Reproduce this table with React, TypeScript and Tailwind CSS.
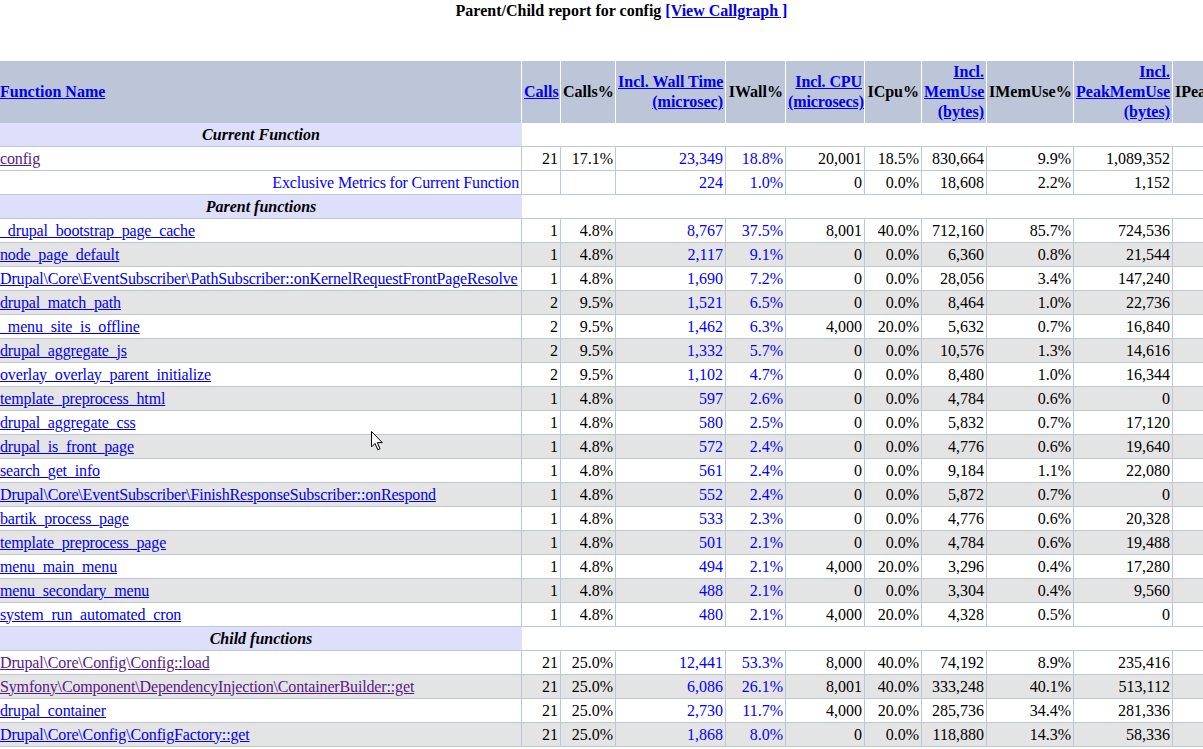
type Row = {
  name: string;
  visited?: boolean;
  calls: string;
  callsPct: string;
  wall: string;
  wallPct: string;
  cpu: string;
  cpuPct: string;
  mem: string;
  memPct: string;
  peak: string;
  peakPct: string;
};

const parents: Row[] = [
  { name: "_drupal_bootstrap_page_cache", calls: "1", callsPct: "4.8%", wall: "8,767", wallPct: "37.5%", cpu: "8,001", cpuPct: "40.0%", mem: "712,160", memPct: "85.7%", peak: "724,536", peakPct: "66.5%" },
  { name: "node_page_default", calls: "1", callsPct: "4.8%", wall: "2,117", wallPct: "9.1%", cpu: "0", cpuPct: "0.0%", mem: "6,360", memPct: "0.8%", peak: "21,544", peakPct: "2.0%" },
  { name: "Drupal\\Core\\EventSubscriber\\PathSubscriber::onKernelRequestFrontPageResolve", calls: "1", callsPct: "4.8%", wall: "1,690", wallPct: "7.2%", cpu: "0", cpuPct: "0.0%", mem: "28,056", memPct: "3.4%", peak: "147,240", peakPct: "13.5%" },
  { name: "drupal_match_path", calls: "2", callsPct: "9.5%", wall: "1,521", wallPct: "6.5%", cpu: "0", cpuPct: "0.0%", mem: "8,464", memPct: "1.0%", peak: "22,736", peakPct: "2.1%" },
  { name: "_menu_site_is_offline", calls: "2", callsPct: "9.5%", wall: "1,462", wallPct: "6.3%", cpu: "4,000", cpuPct: "20.0%", mem: "5,632", memPct: "0.7%", peak: "16,840", peakPct: "1.5%" },
  { name: "drupal_aggregate_js", calls: "2", callsPct: "9.5%", wall: "1,332", wallPct: "5.7%", cpu: "0", cpuPct: "0.0%", mem: "10,576", memPct: "1.3%", peak: "14,616", peakPct: "1.3%" },
  { name: "overlay_overlay_parent_initialize", calls: "2", callsPct: "9.5%", wall: "1,102", wallPct: "4.7%", cpu: "0", cpuPct: "0.0%", mem: "8,480", memPct: "1.0%", peak: "16,344", peakPct: "1.5%" },
  { name: "template_preprocess_html", calls: "1", callsPct: "4.8%", wall: "597", wallPct: "2.6%", cpu: "0", cpuPct: "0.0%", mem: "4,784", memPct: "0.6%", peak: "0", peakPct: "0.0%" },
  { name: "drupal_aggregate_css", calls: "1", callsPct: "4.8%", wall: "580", wallPct: "2.5%", cpu: "0", cpuPct: "0.0%", mem: "5,832", memPct: "0.7%", peak: "17,120", peakPct: "1.6%" },
  { name: "drupal_is_front_page", calls: "1", callsPct: "4.8%", wall: "572", wallPct: "2.4%", cpu: "0", cpuPct: "0.0%", mem: "4,776", memPct: "0.6%", peak: "19,640", peakPct: "1.8%" },
  { name: "search_get_info", calls: "1", callsPct: "4.8%", wall: "561", wallPct: "2.4%", cpu: "0", cpuPct: "0.0%", mem: "9,184", memPct: "1.1%", peak: "22,080", peakPct: "2.0%" },
  { name: "Drupal\\Core\\EventSubscriber\\FinishResponseSubscriber::onRespond", calls: "1", callsPct: "4.8%", wall: "552", wallPct: "2.4%", cpu: "0", cpuPct: "0.0%", mem: "5,872", memPct: "0.7%", peak: "0", peakPct: "0.0%" },
  { name: "bartik_process_page", calls: "1", callsPct: "4.8%", wall: "533", wallPct: "2.3%", cpu: "0", cpuPct: "0.0%", mem: "4,776", memPct: "0.6%", peak: "20,328", peakPct: "1.9%" },
  { name: "template_preprocess_page", calls: "1", callsPct: "4.8%", wall: "501", wallPct: "2.1%", cpu: "0", cpuPct: "0.0%", mem: "4,784", memPct: "0.6%", peak: "19,488", peakPct: "1.8%" },
  { name: "menu_main_menu", calls: "1", callsPct: "4.8%", wall: "494", wallPct: "2.1%", cpu: "4,000", cpuPct: "20.0%", mem: "3,296", memPct: "0.4%", peak: "17,280", peakPct: "1.6%" },
  { name: "menu_secondary_menu", calls: "1", callsPct: "4.8%", wall: "488", wallPct: "2.1%", cpu: "0", cpuPct: "0.0%", mem: "3,304", memPct: "0.4%", peak: "9,560", peakPct: "0.9%" },
  { name: "system_run_automated_cron", calls: "1", callsPct: "4.8%", wall: "480", wallPct: "2.1%", cpu: "4,000", cpuPct: "20.0%", mem: "4,328", memPct: "0.5%", peak: "0", peakPct: "0.0%" },
];

const children: Row[] = [
  { name: "Drupal\\Core\\Config\\Config::load", visited: true, calls: "21", callsPct: "25.0%", wall: "12,441", wallPct: "53.3%", cpu: "8,000", cpuPct: "40.0%", mem: "74,192", memPct: "8.9%", peak: "235,416", peakPct: "21.6%" },
  { name: "Symfony\\Component\\DependencyInjection\\ContainerBuilder::get", visited: true, calls: "21", callsPct: "25.0%", wall: "6,086", wallPct: "26.1%", cpu: "8,001", cpuPct: "40.0%", mem: "333,248", memPct: "40.1%", peak: "513,112", peakPct: "47.1%" },
  { name: "drupal_container", calls: "21", callsPct: "25.0%", wall: "2,730", wallPct: "11.7%", cpu: "4,000", cpuPct: "20.0%", mem: "285,736", memPct: "34.4%", peak: "281,336", peakPct: "25.8%" },
  { name: "Drupal\\Core\\Config\\ConfigFactory::get", calls: "21", callsPct: "25.0%", wall: "1,868", wallPct: "8.0%", cpu: "0", cpuPct: "0.0%", mem: "118,880", memPct: "14.3%", peak: "58,336", peakPct: "5.4%" },
];

const current: Row = { name: "config", visited: true, calls: "21", callsPct: "17.1%", wall: "23,349", wallPct: "18.8%", cpu: "20,001", cpuPct: "18.5%", mem: "830,664", memPct: "9.9%", peak: "1,089,352", peakPct: "9.5%" };

// shared cell look; alignment added per cell
const cell = "h-6 border-b border-r border-[#bdc7d8] whitespace-nowrap leading-[22px]";
const td = `${cell} px-[2px] text-right`;
const nameTd = `${cell} overflow-hidden pr-[2px] pl-0 text-left tracking-[-0.15px]`;
const th = "border-r border-white px-[2px] align-middle font-bold leading-5 whitespace-nowrap";
const headLink = "text-[#0000ee] underline";

function Section({ title }: { title: string }) {
  return (
    <tr>
      <td className="h-6 border-b border-[#bdc7d8] bg-[#dedffa] text-center font-bold italic leading-[22px]">
        {title}
      </td>
      <td colSpan={10} className="h-6 border-b border-[#bdc7d8] bg-white" />
    </tr>
  );
}

function DataRow({ row, gray }: { row: Row; gray: boolean }) {
  return (
    <tr className={gray ? "bg-[#e4e4e4]" : "bg-white"}>
      <td className={nameTd}>
        <a className={`underline ${row.visited ? "text-[#551a8b]" : "text-[#0000ee]"}`}>{row.name}</a>
      </td>
      <td className={td}>{row.calls}</td>
      <td className={td}>{row.callsPct}</td>
      <td className={`${td} text-[#0000ff]`}>{row.wall}</td>
      <td className={`${td} text-[#0000ff]`}>{row.wallPct}</td>
      <td className={td}>{row.cpu}</td>
      <td className={td}>{row.cpuPct}</td>
      <td className={td}>{row.mem}</td>
      <td className={td}>{row.memPct}</td>
      <td className={td}>{row.peak}</td>
      <td className={td}>{row.peakPct}</td>
    </tr>
  );
}

function Cursor() {
  return (
    <svg className="absolute left-[371px] top-[431px]" width="13" height="20" viewBox="0 0 13 20">
      <path d="M0.5 0.5 L0.5 16 L4 12.5 L6.8 18.8 L9 17.8 L6.3 11.6 L11.3 11.6 Z" fill="#ffffff" stroke="#000000" strokeWidth="1" strokeLinejoin="miter" />
    </svg>
  );
}

export default function App() {
  return (
    <div className="relative min-h-[749px] bg-white text-[16px] text-black" style={{ fontFamily: '"Liberation Serif", "Times New Roman", serif' }}>
      <div className="w-[1243px] pt-[2px] text-center font-bold leading-[18px]">
        Parent/Child report for config{" "}
        <a className="text-[#0000ee] underline">[View Callgraph ]</a>
      </div>
      <table className="mt-[41px] w-[1293px] table-fixed border-separate border-spacing-0">
        <thead>
          <tr className="bg-[#bcc6d8]">
            <th className={`${th} w-[522px] pl-0 text-left`}>
              <a className={headLink}>Function Name</a>
            </th>
            <th className={`${th} w-[39px] text-right`}>
              <a className={headLink}>Calls</a>
            </th>
            <th className={`${th} w-[55px] text-right`}>Calls%</th>
            <th className={`${th} w-[110px] text-right`}>
              <a className={headLink}>
                Incl. Wall Time
                <br />
                (microsec)
              </a>
            </th>
            <th className={`${th} w-[60px] text-right`}>IWall%</th>
            <th className={`${th} w-[79px] text-right tracking-[-0.1px]`}>
              <a className={headLink}>
                Incl. CPU
                <br />
                (microsecs)
              </a>
            </th>
            <th className={`${th} w-[57px] text-right`}>ICpu%</th>
            <th className={`${th} h-[62px] w-[65px] text-right`}>
              <a className={headLink}>
                Incl.
                <br />
                MemUse
                <br />
                (bytes)
              </a>
            </th>
            <th className={`${th} w-[87px] text-right`}>IMemUse%</th>
            <th className={`${th} w-[99px] text-right`}>
              <a className={headLink}>
                Incl.
                <br />
                PeakMemUse
                <br />
                (bytes)
              </a>
            </th>
            <th className={`${th} w-[120px] text-right`}>IPeakMemUse%</th>
          </tr>
        </thead>
        <tbody>
          <Section title="Current Function" />
          <DataRow row={current} gray={false} />
          <tr className="bg-white">
            <td className={`${td} tracking-[-0.15px] text-[#0000ff]`}>Exclusive Metrics for Current Function</td>
            <td className={td}></td>
            <td className={td}></td>
            <td className={`${td} text-[#0000ff]`}>224</td>
            <td className={`${td} text-[#0000ff]`}>1.0%</td>
            <td className={td}>0</td>
            <td className={td}>0.0%</td>
            <td className={td}>18,608</td>
            <td className={td}>2.2%</td>
            <td className={td}>1,152</td>
            <td className={td}>0.1%</td>
          </tr>
          <Section title="Parent functions" />
          {parents.map((r, i) => (
            <DataRow key={r.name} row={r} gray={i % 2 === 1} />
          ))}
          <Section title="Child functions" />
          {children.map((r, i) => (
            <DataRow key={r.name} row={r} gray={i % 2 === 1} />
          ))}
        </tbody>
      </table>
      <Cursor />
    </div>
  );
}
